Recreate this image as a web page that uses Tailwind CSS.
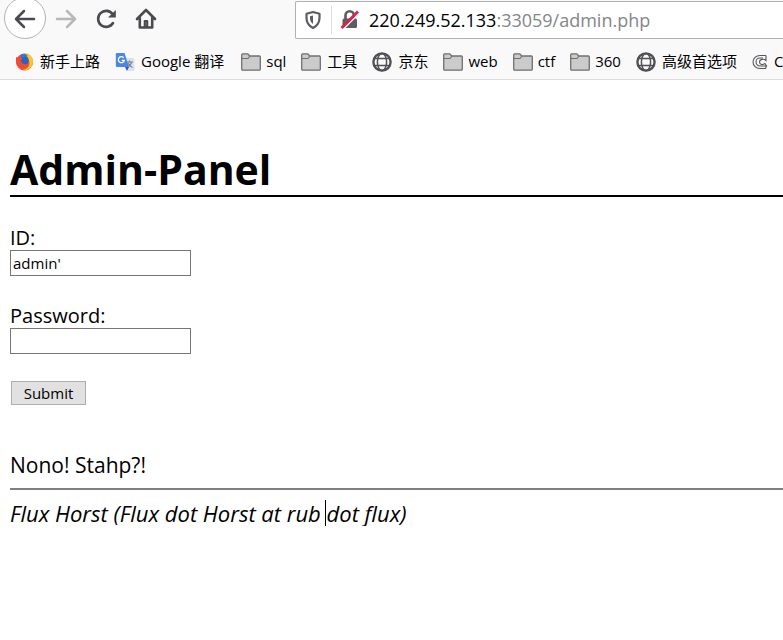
<!DOCTYPE html>
<html lang="zh-CN">
<head>
    <meta charset="UTF-8">
    <meta name="viewport" content="width=device-width, initial-scale=1.0">
    <title>Admin-Panel</title>
    <script src="https://cdn.jsdelivr.net/npm/@tailwindcss/browser@4"></script>
</head>
<body class="bg-white text-black overflow-hidden font-['Open_Sans','Noto_Sans_CJK_SC',sans-serif]">
    <!-- Shared icons -->
    <svg class="hidden">
        <symbol id="folder" viewBox="0 0 20 18">
            <path d="M.7 16.300V1.700Q.7.8 1.600.8H6.800l2 2.200H18.400q.9 0 .9.900V16.300q0 .9-.9.900H1.600q-.9 0-.9-.9z" fill="#cbcbcb" stroke="#707070" stroke-width="1.300"/>
            <path d="M1 5.500H7l2-2.500" fill="none" stroke="#707070" stroke-width="1.200"/>
        </symbol>
        <symbol id="globe" viewBox="0 0 20 20">
            <g fill="none" stroke="#505055">
                <circle cx="10" cy="10" r="8.600" stroke-width="2.400"/>
                <ellipse cx="10" cy="10" rx="4.600" ry="8.600" stroke-width="1.500"/>
                <path d="M2.500 6.500h15M2.500 13.500h15" stroke-width="1.500"/>
            </g>
        </symbol>
    </svg>

    <header class="bg-[#f9f9fa] border-b border-[#dcdcdc] h-20 overflow-hidden">
        <nav class="flex items-center h-10 pl-1">
            <button aria-label="Back" class="size-[42px] -mt-1 rounded-full border border-[#b4b4b6] bg-white flex items-center justify-center shrink-0">
                <svg class="size-6" viewBox="0 0 24 24" fill="none" stroke="#4a4a4f" stroke-width="2.500" stroke-linecap="round" stroke-linejoin="round"><path d="M21 13H3.500M11 5l-8 8 8 8"/></svg>
            </button>
            <button aria-label="Forward" class="ml-2 -mt-1 shrink-0">
                <svg class="size-6" viewBox="0 0 24 24" fill="none" stroke="#b8b8ba" stroke-width="2.500" stroke-linecap="round" stroke-linejoin="round"><path d="M3 13h17.500M13 5l8 8-8 8"/></svg>
            </button>
            <button aria-label="Reload" class="ml-4 -mt-1 shrink-0">
                <svg class="size-6" viewBox="0 0 24 24" fill="none" stroke="#4a4a4f" stroke-width="2.600" stroke-linecap="round"><path d="M19 17A8 8 0 1 1 18.500 8"/><path d="M21.800 4v7.500H14z" fill="#4a4a4f" stroke="none"/></svg>
            </button>
            <button aria-label="Home" class="ml-4 -mt-1 shrink-0">
                <svg class="size-6" viewBox="0 0 24 24" fill="none" stroke="#4a4a4f" stroke-width="2.600" stroke-linecap="round" stroke-linejoin="round"><path d="M3 13L12 4l9 9M5.800 12V21.500h12.400V12"/><path d="M10.800 21v-6h2.400v6" stroke-width="2.200"/></svg>
            </button>
            <div class="flex items-center ml-[137px] flex-1 h-[38px] bg-white border border-r-0 border-[#b1b1b3] rounded-l-xs pl-2">
                <svg class="w-[18px] h-5 shrink-0" viewBox="0 0 18 20"><path d="M9 2l6.500 1.800V8c0 5-2.500 8-6.500 10C5 16 2.500 13 2.500 8V3.800z" fill="none" stroke="#5c5c61" stroke-width="2.200" stroke-linejoin="round"/><path d="M9 5.500v8.500C7 12.500 6 10.500 6 8V6.300z" fill="#5c5c61"/></svg>
                <span class="w-px h-7 bg-[#dedee0] ml-[9px] mr-2"></span>
                <svg class="size-5 shrink-0" viewBox="0 0 20 20"><rect x="2.500" y="8.500" width="14.500" height="9.500" rx="1.500" fill="#5c5c61"/><path d="M5.500 9.500V5.500a4.200 4.200 0 0 1 8.400 0v4" fill="none" stroke="#5c5c61" stroke-width="2.600"/><path d="M3 19.500L19.500 3" stroke="#fff" stroke-width="1.500"/><path d="M1.500 18L18 1.500" stroke="#d7264b" stroke-width="2.800"/></svg>
                <a href="#" class="ml-[9px] text-lg text-[#85858a] whitespace-nowrap"><span class="text-black">220.249.52.133</span>:33059/admin.php</a>
            </div>
        </nav>

        <nav class="flex items-center gap-[15px] h-[43px] pl-[15px] text-[15px] whitespace-nowrap">
            <a href="#" class="flex items-center gap-[6px] shrink-0">
                <svg class="size-[19px]" viewBox="0 0 20 20"><circle cx="10" cy="10.500" r="9" fill="#f2582b"/><path d="M11 1c7 1 9.500 8 7 13-2 4-6 6.500-10 5 5-1 8-4 7-9-.5-3-4-5-4-9z" fill="#ffc52e"/><circle cx="9.500" cy="9" r="5" fill="#2b61c4"/><path d="M1.500 5l2 1c2-1 3 0 4.500 1l-2 2c1 4 5 5 8.500 3-1 4-5 6-9 4.500C2 15 0 10 1.500 5z" fill="#ee4a35"/><path d="M5 4c2-3 7-3 9 1-2-1-4 0-5 1z" fill="#2f7bd8"/></svg>
                新手上路
            </a>
            <a href="#" class="flex items-center gap-[6px] shrink-0 pr-[2px]">
                <svg class="size-5" viewBox="0 0 20 20"><path d="M8 6h10q1.500 0 1.500 1.500v10q0 1.500-1.500 1.500h-5z" fill="#dfe1e5"/><path d="M11.500 10h6.500M14.500 8.500V10M16.500 10c-.5 2.500-2 4-4 5M13 11c1 2 2.500 3.500 4.500 4.500" fill="none" stroke="#74808c" stroke-width="1.200"/><path d="M2 1h7.500l4.500 14H2Q.8 15 .8 13.800V2.200Q.8 1 2 1z" fill="#4a86e8"/><path d="M10 15h4l-2 4z" fill="#2a56c6"/><path d="M8.700 5.800A3 3 0 1 0 9.300 8.300H6.800" fill="none" stroke="#fff" stroke-width="1.300"/></svg>
                Google 翻译
            </a>
            <a href="#" class="flex items-center gap-[5px] shrink-0"><svg class="w-5 h-[18px]"><use href="#folder"/></svg>sql</a>
            <a href="#" class="flex items-center gap-[6px] shrink-0"><svg class="w-5 h-[18px]"><use href="#folder"/></svg>工具</a>
            <a href="#" class="flex items-center gap-[6px] shrink-0"><svg class="size-5"><use href="#globe"/></svg>京东</a>
            <a href="#" class="flex items-center gap-[5px] shrink-0"><svg class="w-5 h-[18px]"><use href="#folder"/></svg>web</a>
            <a href="#" class="flex items-center gap-[5px] shrink-0"><svg class="w-5 h-[18px]"><use href="#folder"/></svg>ctf</a>
            <a href="#" class="flex items-center gap-[5px] shrink-0"><svg class="w-5 h-[18px]"><use href="#folder"/></svg>360</a>
            <a href="#" class="flex items-center gap-[6px] shrink-0"><svg class="size-5"><use href="#globe"/></svg>高级首选项</a>
            <a href="#" class="flex items-center gap-[6px] shrink-0">
                <svg class="size-4" viewBox="0 0 16 16" fill="none" stroke="#55555a" stroke-width="1.100"><path d="M14 1.500H8C4 1.500 1 4.500 1 8s3 6.500 7 6.500h5.500l1-2.500H8.500C5.500 12 4 10.300 4 8s1.500-4 4-4h3"/><path d="M14 1.500V6.500C12 4.500 7.500 5 7.500 8s3.500 3 5.500 1.500l1.500 2.500"/></svg>
                C
            </a>
        </nav>
    </header>

    <main class="pl-[10px] text-xl leading-[26px]">
        <h1 class="mt-[59px] h-[58px] border-b-2 border-black text-[41px] leading-[60px] font-bold">Admin-Panel</h1>
        <form class="mt-7">
            <label for="user" class="block h-[25px]">ID:</label>
            <input id="user" type="text" value="admin'" class="block w-[181px] h-[26px] border border-[#767676] px-[2px] text-[15px]">
            <label for="pass" class="block mt-[27px] h-[25px]">Password:</label>
            <input id="pass" type="password" class="block w-[181px] h-[26px] border border-[#767676] px-[2px] text-[15px]">
            <button type="button" class="block mt-[27px] ml-px w-[75px] h-6 border border-[#adadad] bg-[#e1e1e1] text-[15px] leading-[22px]">Submit</button>
        </form>
        <p class="mt-[47px] text-[21px]">Nono! Stahp?!</p>
        <hr class="mt-[10px] border-t-2 border-[#808080]">
        <address class="mt-[10px] text-[22px]">Flux Horst (Flux dot Horst at rub <span class="relative"><span class="absolute -left-[2px] top-[2px] w-px h-[26px] bg-black"></span>dot</span> flux)</address>
    </main>
</body>
</html>
